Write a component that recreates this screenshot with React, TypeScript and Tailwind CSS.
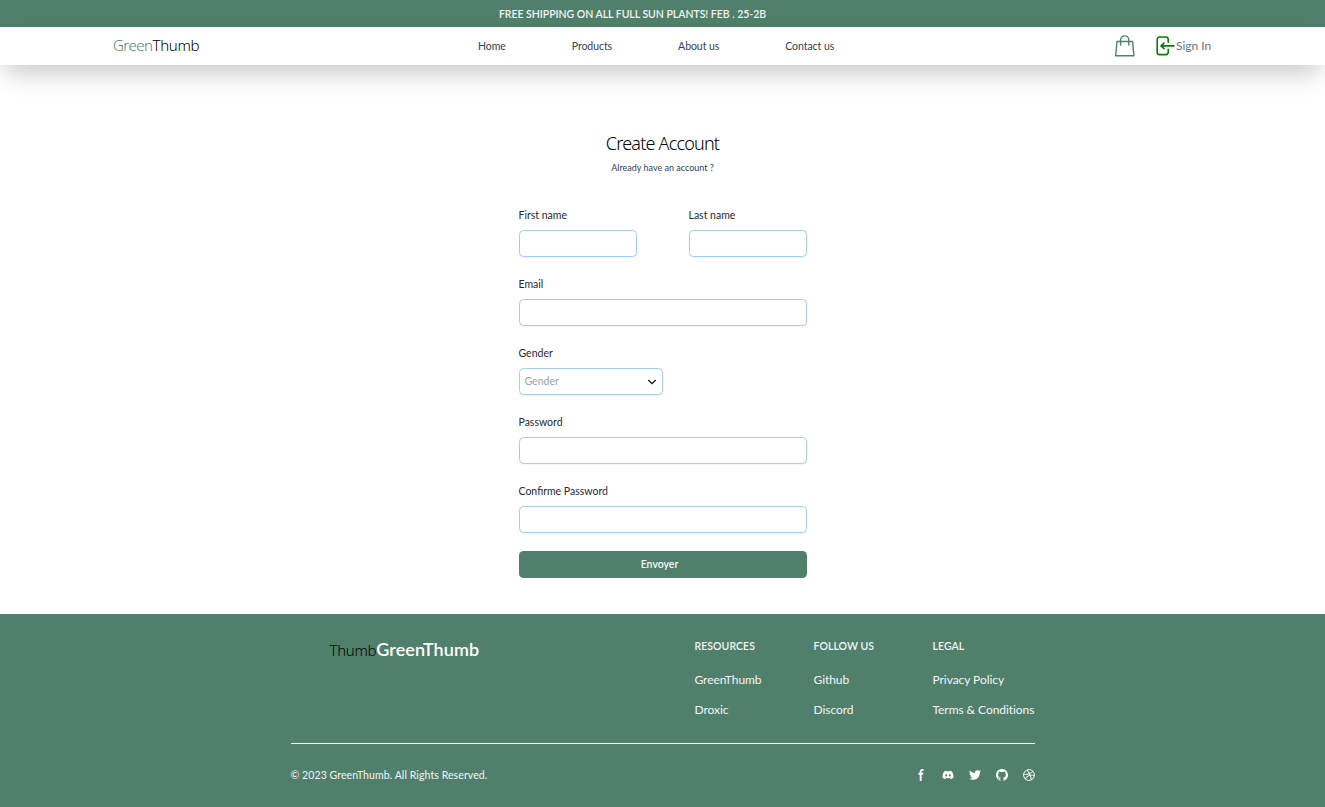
import type { ReactNode } from "react";
import { FaDiscord, FaDribbble, FaTwitter } from "react-icons/fa";

function BagIcon() {
  return (
    <svg width="22" height="24" viewBox="0 0 22 24" fill="none" stroke="#50806b" strokeWidth="1.4" strokeLinejoin="round" strokeLinecap="round">
      <path d="M3 7.5h15.6l1.3 14.2H1.6z" />
      <path d="M6.6 11V6a4.1 4.1 0 0 1 8.2 0V11" />
    </svg>
  );
}

function SignInIcon() {
  return (
    <svg width="20" height="20" viewBox="0 0 20 20" fill="none" stroke="#008000" strokeWidth="1.6" strokeLinejoin="round" strokeLinecap="round">
      <path d="M12.2 6.2V3.4a2.4 2.4 0 0 0-2.4-2.4H3.6a2.4 2.4 0 0 0-2.4 2.4v12.8a2.4 2.4 0 0 0 2.4 2.4h6.2a2.4 2.4 0 0 0 2.4-2.4v-2.8" />
      <path d="M18 9.9H5.2M8 7.1L5 9.9l3 2.8" />
    </svg>
  );
}

function FacebookIcon() {
  return (
    <svg width="12" height="12" viewBox="0 0 8 19" fill="currentColor">
      <path d="M6.135 3H8V0H6.135a4.147 4.147 0 0 0-4.142 4.142V6H0v3h2v9.938h3V9h2.021l.592-3H5V3.591A.6.6 0 0 1 5.592 3h.543Z" />
    </svg>
  );
}

function GithubIcon() {
  return (
    <svg width="12" height="12" viewBox="2 2 20 20" fill="currentColor">
      <path
        fillRule="evenodd"
        clipRule="evenodd"
        d="M12 2C6.477 2 2 6.484 2 12.017c0 4.425 2.865 8.18 6.839 9.504.5.092.682-.217.682-.483 0-.237-.008-.868-.013-1.703-2.782.605-3.369-1.343-3.369-1.343-.454-1.158-1.11-1.466-1.11-1.466-.908-.62.069-.608.069-.608 1.003.07 1.531 1.032 1.531 1.032.892 1.53 2.341 1.088 2.91.832.092-.647.35-1.088.636-1.338-2.22-.253-4.555-1.113-4.555-4.951 0-1.093.39-1.988 1.029-2.688-.103-.253-.446-1.272.098-2.65 0 0 .84-.27 2.75 1.026A9.564 9.564 0 0112 6.844c.85.004 1.705.115 2.504.337 1.909-1.296 2.747-1.027 2.747-1.027.546 1.379.202 2.398.1 2.651.64.7 1.028 1.595 1.028 2.688 0 3.848-2.339 4.695-4.566 4.943.359.309.678.92.678 1.855 0 1.338-.012 2.419-.012 2.747 0 .268.18.58.688.482A10.019 10.019 0 0022 12.017C22 6.484 17.522 2 12 2z"
      />
    </svg>
  );
}

const inputClass =
  "block h-[27px] w-full rounded-[4.5px] border border-[#a4cafe] bg-white px-[5px] text-[10.5px] shadow-xs outline-none";
const labelClass = "mb-[7px] block pt-px text-[10.5px] leading-[15px] text-[#1f2937]";

function Field({ label, type = "text", className = "w-full" }: { label: string; type?: string; className?: string }) {
  return (
    <label className={className}>
      <span className={labelClass}>{label}</span>
      <input type={type} className={inputClass} />
    </label>
  );
}

function LinkColumn({ title, links, className }: { title: string; links: string[]; className: string }) {
  return (
    <div className={className}>
      <h2 className="mb-[17px] pt-px text-[10.5px] leading-[15px] font-semibold tracking-[0.05px]">{title}</h2>
      <ul className="flex flex-col gap-3 text-[12px] leading-[18px] tracking-[-0.06px]">
        {links.map((l) => (
          <li key={l}>
            <a href="#">{l}</a>
          </li>
        ))}
      </ul>
    </div>
  );
}

function Social({ children }: { children: ReactNode }) {
  return (
    <a href="#" className="flex size-3 items-center justify-center">
      {children}
    </a>
  );
}

export default function App() {
  return (
    <div className="flex h-[807px] w-full flex-col overflow-hidden bg-white font-['Lato','Open_Sans',sans-serif] text-black">
      <div className="flex h-[27px] items-center justify-center bg-[#50806b] pt-[2px] pr-[60px] text-[10.5px] font-semibold tracking-[-0.03px] text-gray-100">
        FREE SHIPPING ON ALL FULL SUN PLANTS! FEB . 25-2B
      </div>

      <header className="flex h-[38px] shrink-0 items-center bg-white pl-[113px] shadow-[0_11px_27px_-5px_rgba(0,0,0,0.25)]">
        <div className="w-[365px] pb-[3px] font-['Noto_Sans',sans-serif] text-[15px] leading-5 font-light">
          <span className="tracking-[-0.5px] text-[#50806b]">Green</span>
          <span className="tracking-[-0.3px]">Thumb</span>
        </div>
        <nav className="flex w-[636px] gap-[66px] pt-px text-[10.5px] tracking-[-0.06px] text-gray-700">
          <a href="#">Home</a>
          <a href="#">Products</a>
          <a href="#">About us</a>
          <a href="#">Contact us</a>
        </nav>
        <BagIcon />
        <a href="#" className="ml-5 flex items-center text-[12px] text-gray-500">
          <SignInIcon />
          Sign In
        </a>
      </header>

      <main className="mx-auto flex h-[549px] w-72 shrink-0 flex-col pt-[65px]">
        <h1 className="text-center font-['Noto_Sans',sans-serif] text-[18px] leading-[27px] font-light tracking-[-0.8px]">Create Account</h1>
        <p className="mt-[5px] text-center text-[9px] leading-3 text-gray-700">Already have an account ?</p>
        <form className="mt-[33px] flex flex-col gap-[19px]">
          <div className="flex justify-between">
            <Field label="First name" className="w-[118px]" />
            <Field label="Last name" className="w-[118px]" />
          </div>
          <Field label="Email" type="email" />
          <div>
            <span className={labelClass}>Gender</span>
            <button type="button" className="flex h-[27px] w-36 items-center justify-between rounded-[4.5px] border border-[#a4cafe] bg-white pr-[5px] pl-[5px] text-[10.5px] text-gray-400 shadow-xs">
              <span>Gender</span>
              <svg width="10" height="10" viewBox="0 0 10 10" fill="none" stroke="#111" strokeWidth="1.3">
                <path d="M1.3 3L5 6.6 8.7 3" />
              </svg>
            </button>
          </div>
          <Field label="Password" type="password" />
          <Field label="Confirme Password" type="password" />
          <button type="button" className="-mt-px h-[27px] rounded-[4.5px] bg-[#50806b] pt-px pr-[6px] text-[10.5px] font-semibold text-gray-50">
            Envoyer
          </button>
        </form>
      </main>

      <footer className="h-[193px] shrink-0 bg-[#50806b] text-gray-100">
        <div className="mx-auto w-[744px] pt-6">
          <div className="flex h-[105px]">
            <div className="-mt-px flex w-[404px] items-baseline self-start pl-[39px] leading-6">
              <span className="font-['Noto_Sans',sans-serif] text-[15px] font-light tracking-[-0.3px] text-black">Thumb</span>
              <span className="text-[18px] font-semibold tracking-[0.08px] text-white">GreenThumb</span>
            </div>
            <LinkColumn title="RESOURCES" links={["GreenThumb", "Droxic"]} className="w-[119px]" />
            <LinkColumn title="FOLLOW US" links={["Github", "Discord"]} className="w-[119px]" />
            <LinkColumn title="LEGAL" links={["Privacy Policy", "Terms & Conditions"]} className="w-[102px] whitespace-nowrap" />
          </div>
          <div className="flex justify-between border-t border-white pt-6">
            <span className="text-[10.5px] leading-[15px] tracking-[0.09px]">© 2023 GreenThumb. All Rights Reserved.</span>
            <div className="flex items-center gap-[15px] pb-[2px] text-white">
              <Social><FacebookIcon /></Social>
              <Social><FaDiscord size={12} /></Social>
              <Social><FaTwitter size={12} /></Social>
              <Social><GithubIcon /></Social>
              <Social><FaDribbble size={12} /></Social>
            </div>
          </div>
        </div>
      </footer>
    </div>
  );
}
